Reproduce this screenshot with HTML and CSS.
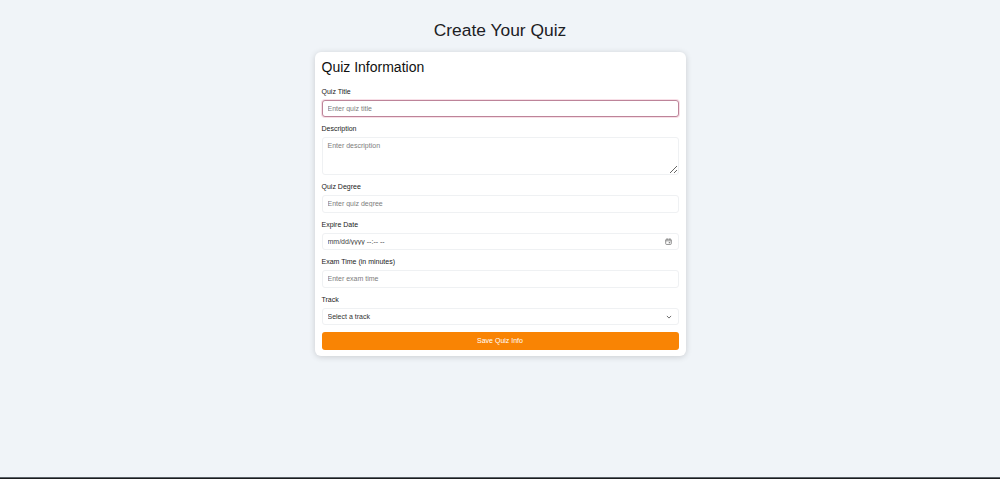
FILE: index.html
```html
<!DOCTYPE html>
<html lang="en">
<head>
  <meta charset="UTF-8">
  <meta name="viewport" content="width=device-width, initial-scale=1.0">
  <title>Create Your Quiz</title>
  <link rel="stylesheet" href="styles.css">
</head>
<body>
  <main class="page">
    <h1>Create Your Quiz</h1>
    <form class="card">
      <h2>Quiz Information</h2>
      <div class="field">
        <label>Quiz Title</label>
        <input class="control focused" type="text" placeholder="Enter quiz title">
      </div>
      <div class="field">
        <label>Description</label>
        <textarea class="control area" placeholder="Enter description"></textarea>
      </div>
      <div class="field">
        <label>Quiz Degree</label>
        <input class="control" type="text" placeholder="Enter quiz degree">
      </div>
      <div class="field">
        <label>Expire Date</label>
        <div class="control-wrap">
          <input class="control date" type="text" placeholder="mm/dd/yyyy --:-- --">
          <svg class="calendar" viewBox="0 0 10 10" width="7" height="7" aria-hidden="true">
            <rect x="1" y="1.8" width="8" height="7.4" rx="1.2" fill="none" stroke="#666" stroke-width="1"/>
            <path d="M3 .6v2M7 .6v2M1 4h8" fill="none" stroke="#666" stroke-width="1"/>
            <rect x="5.4" y="5.6" width="2" height="2" fill="#888"/>
          </svg>
        </div>
      </div>
      <div class="field">
        <label>Exam Time (in minutes)</label>
        <input class="control" type="text" placeholder="Enter exam time">
      </div>
      <div class="field">
        <label>Track</label>
        <div class="control-wrap">
          <select class="control">
            <option>Select a track</option>
          </select>
          <svg class="chevron" viewBox="0 0 10 10" width="6" height="6" aria-hidden="true">
            <path d="M1.5 3.2 5 6.8l3.5-3.6" fill="none" stroke="#555" stroke-width="1.4"/>
          </svg>
        </div>
      </div>
      <button type="button">Save Quiz Info</button>
    </form>
  </main>
  <div class="bottom-line"></div>
</body>
</html>
```

FILE: styles.css
```css
* { margin: 0; padding: 0; box-sizing: border-box; }
body {
  font-family: "Liberation Sans", Arial, sans-serif;
  background: #f0f4f8;
  color: #111;
  min-height: 100vh;
  display: flex;
  flex-direction: column;
}
.page {
  flex: 1;
  display: flex;
  flex-direction: column;
  align-items: center;
  padding-top: 20px;
}
h1 {
  font-size: 17.4px;
  font-weight: 400;
  line-height: 21px;
  color: #1c2024;
  margin-bottom: 11px;
}
.card {
  width: 371px;
  background: #fff;
  border-radius: 6px;
  padding: 7px 7px 6.5px;
  box-shadow: 0 1px 6px rgba(0,0,0,0.16);
}
h2 {
  font-size: 14px;
  font-weight: 400;
  line-height: 16px;
  margin-bottom: 11.5px;
}
.field { margin-bottom: 7px; }
label {
  display: block;
  font-size: 7px;
  line-height: 9px;
  margin-bottom: 4px;
  color: #222;
}
.control {
  display: block;
  width: 100%;
  height: 17.5px;
  padding: 0 5px;
  border: 1px solid #eff1f3;
  border-radius: 3px;
  background: #fff;
  font-family: inherit;
  font-size: 7px;
  color: #333;
  outline: none;
}
.control::placeholder { color: #7d7d7d; }
.date::placeholder { color: #444; }
.focused {
  border-color: #bd8499;
  box-shadow: 0 0 0 1px #f8dfe7;
}
.area {
  height: 38px;
  padding: 4px 5px;
  resize: vertical;
}
.control-wrap { position: relative; }
.control-wrap select { appearance: none; }
.calendar,
.chevron {
  position: absolute;
  right: 7px;
  top: 5px;
}
.chevron { top: 6px; }
button {
  display: block;
  width: 100%;
  height: 17.5px;
  border: none;
  border-radius: 3px;
  background: #f98404;
  color: #fff;
  font-family: inherit;
  font-size: 7px;
  cursor: pointer;
}
.bottom-line {
  height: 2px;
  background: #1a1c1e;
  border-top: 1px solid #5b6269;
}
```
